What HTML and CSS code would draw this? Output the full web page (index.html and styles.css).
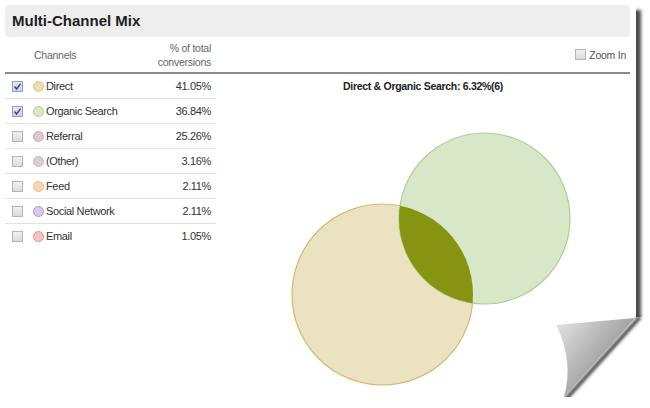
FILE: index.html
```html
<!DOCTYPE html>
<html lang="en">
<head>
    <meta charset="UTF-8">
    <title>Multi-Channel Mix</title>
    <link rel="stylesheet" href="styles.css">
</head>
<body>

    <div class="page">

        <!-- Title bar -->
        <div class="title-bar">Multi-Channel Mix</div>

        <div class="report">
            <!-- Column heads -->
            <div class="head head-left">
                <span class="head-channels">Channels</span>
                <span class="head-pct">% of total<br>conversions</span>
            </div>
            <div class="head head-right">
                <span class="box"></span>
                <span class="zoom-label">Zoom In</span>
            </div>

            <!-- Channel table -->
            <div class="channels">
                <div class="row">
                    <span class="box checked"><svg viewBox="0 0 11 11"><path d="M2.5 5.5 L4.6 8 L8.6 2.6"/></svg></span>
                    <span class="dot dot-direct"></span>
                    <span class="name">Direct</span>
                    <span class="pct">41.05%</span>
                </div>
                <div class="row">
                    <span class="box checked"><svg viewBox="0 0 11 11"><path d="M2.5 5.5 L4.6 8 L8.6 2.6"/></svg></span>
                    <span class="dot dot-organic"></span>
                    <span class="name">Organic Search</span>
                    <span class="pct">36.84%</span>
                </div>
                <div class="row">
                    <span class="box"></span>
                    <span class="dot dot-referral"></span>
                    <span class="name">Referral</span>
                    <span class="pct">25.26%</span>
                </div>
                <div class="row">
                    <span class="box"></span>
                    <span class="dot dot-other"></span>
                    <span class="name">(Other)</span>
                    <span class="pct">3.16%</span>
                </div>
                <div class="row">
                    <span class="box"></span>
                    <span class="dot dot-feed"></span>
                    <span class="name">Feed</span>
                    <span class="pct">2.11%</span>
                </div>
                <div class="row">
                    <span class="box"></span>
                    <span class="dot dot-social"></span>
                    <span class="name">Social Network</span>
                    <span class="pct">2.11%</span>
                </div>
                <div class="row last">
                    <span class="box"></span>
                    <span class="dot dot-email"></span>
                    <span class="name">Email</span>
                    <span class="pct">1.05%</span>
                </div>
            </div>

            <!-- Venn chart -->
            <div class="chart">
                <div class="chart-title">Direct &amp; Organic Search: 6.32%(6)</div>
                <svg class="venn" width="414" height="297" viewBox="0 0 414 297">
                    <defs>
                        <clipPath id="clip-direct">
                            <circle cx="166.5" cy="199.5" r="90.5"/>
                        </clipPath>
                    </defs>
                    <circle cx="166.5" cy="199.5" r="90.5" fill="#eae2c0" stroke="#d4bb70" stroke-width="1.2"/>
                    <circle cx="268.5" cy="123.5" r="85.5" fill="#d7e7c8" stroke="#accf90" stroke-width="1.2"/>
                    <circle cx="268.5" cy="123.5" r="85.5" fill="#879411" clip-path="url(#clip-direct)"/>
                </svg>
            </div>
        </div>

        <!-- Page curl in the corner -->
        <svg class="curl" width="100" height="108" viewBox="0 0 100 108">
            <defs>
                <filter id="soft" x="-50%" y="-50%" width="200%" height="200%">
                    <feGaussianBlur stdDeviation="1.6"/>
                </filter>
                <linearGradient id="flap" x1="0" y1="0" x2="1" y2="0.8">
                    <stop offset="0" stop-color="#e6e6e6"/>
                    <stop offset="0.6" stop-color="#a6a6a6"/>
                    <stop offset="1" stop-color="#7e7e7e"/>
                </linearGradient>
            </defs>
            <polygon points="87,12 100,12 100,108 12,108 12,92" fill="#fff"/>
            <line x1="90" y1="12" x2="15" y2="95" stroke="#4a4a4a" stroke-width="4" filter="url(#soft)"/>
            <path d="M6,20 Q38,17 85,13 L14,92 Q24,56 6,20 Z" fill="url(#flap)"/>
        </svg>
    </div>

</body>
</html>
```

FILE: styles.css
```css
body {
    margin: 0;
    background: #ffffff;
    font-family: "Liberation Sans", Arial, sans-serif;
    overflow: hidden;
}
.page {
    position: relative;
    width: 636px;
    height: 392px;
    background: #ffffff;
    box-shadow: 5px 5px 3px rgba(0, 0, 0, 0.7);
}
.title-bar {
    margin: 5px 6px 0 5px;
    height: 32px;
    line-height: 32px;
    padding-left: 7px;
    background: #eeeeee;
    border-radius: 4px;
    font-size: 15px;
    font-weight: bold;
    color: #1e1e1e;
}
.report {
    display: grid;
    grid-template-columns: 211px 1fr;
    margin: 0 6px 0 5px;
}
.head {
    height: 35px;
    border-bottom: 2px solid #8c8c8c;
    display: flex;
    align-items: center;
    font-size: 10.5px;
    letter-spacing: -0.25px;
    color: #666666;
}
.head-left {
    justify-content: space-between;
    padding: 0 5px 0 29px;
}
.head-pct {
    text-align: right;
    line-height: 14px;
}
.head-right {
    justify-content: flex-end;
    gap: 3px;
    padding-right: 4px;
}
.zoom-label {
    color: #555555;
}
.channels {
    display: flex;
    flex-direction: column;
}
.row {
    height: 24px;
    border-bottom: 1px solid #e2e2e2;
    display: flex;
    align-items: center;
    padding: 0 5px 0 7px;
    font-size: 11px;
    letter-spacing: -0.35px;
    color: #333333;
}
.row.last {
    border-bottom: none;
}
.box {
    width: 9px;
    height: 9px;
    border: 1px solid #b4b4b4;
    background: linear-gradient(#f1f1f1, #dcdcdc);
    display: inline-block;
    flex: none;
    position: relative;
}
.box.checked {
    border-color: #9aa0b4;
    background: linear-gradient(#e6e9f2, #cdd2e0);
}
.box svg {
    position: absolute;
    left: -1px;
    top: -1px;
    width: 11px;
    height: 11px;
}
.box svg path {
    fill: none;
    stroke: #2b4fa8;
    stroke-width: 1.5;
}
.channels .box {
    margin-right: 10px;
}
.dot {
    width: 9px;
    height: 9px;
    border-radius: 50%;
    border: 1px solid;
    flex: none;
    margin-right: 2px;
}
.dot-direct { background: #eadfb0; border-color: #d9c788; }
.dot-organic { background: #d6eac8; border-color: #a9d291; }
.dot-referral { background: #ddc9d3; border-color: #c7a9b8; }
.dot-other { background: #ddcdd6; border-color: #cbb3c0; }
.dot-feed { background: #fdd6b4; border-color: #f4b27a; }
.dot-social { background: #d7caee; border-color: #ad97db; }
.dot-email { background: #f7c2c2; border-color: #e58c8c; }
.name {
    flex: 1;
}
.pct {
    text-align: right;
}
.chart {
    display: flex;
    flex-direction: column;
    align-items: center;
}
.chart-title {
    height: 21px;
    line-height: 24px;
    font-size: 10.5px;
    letter-spacing: -0.3px;
    font-weight: bold;
    color: #222222;
}
.venn {
    display: block;
}
.curl {
    position: absolute;
    left: 550px;
    top: 300px;
}
```
